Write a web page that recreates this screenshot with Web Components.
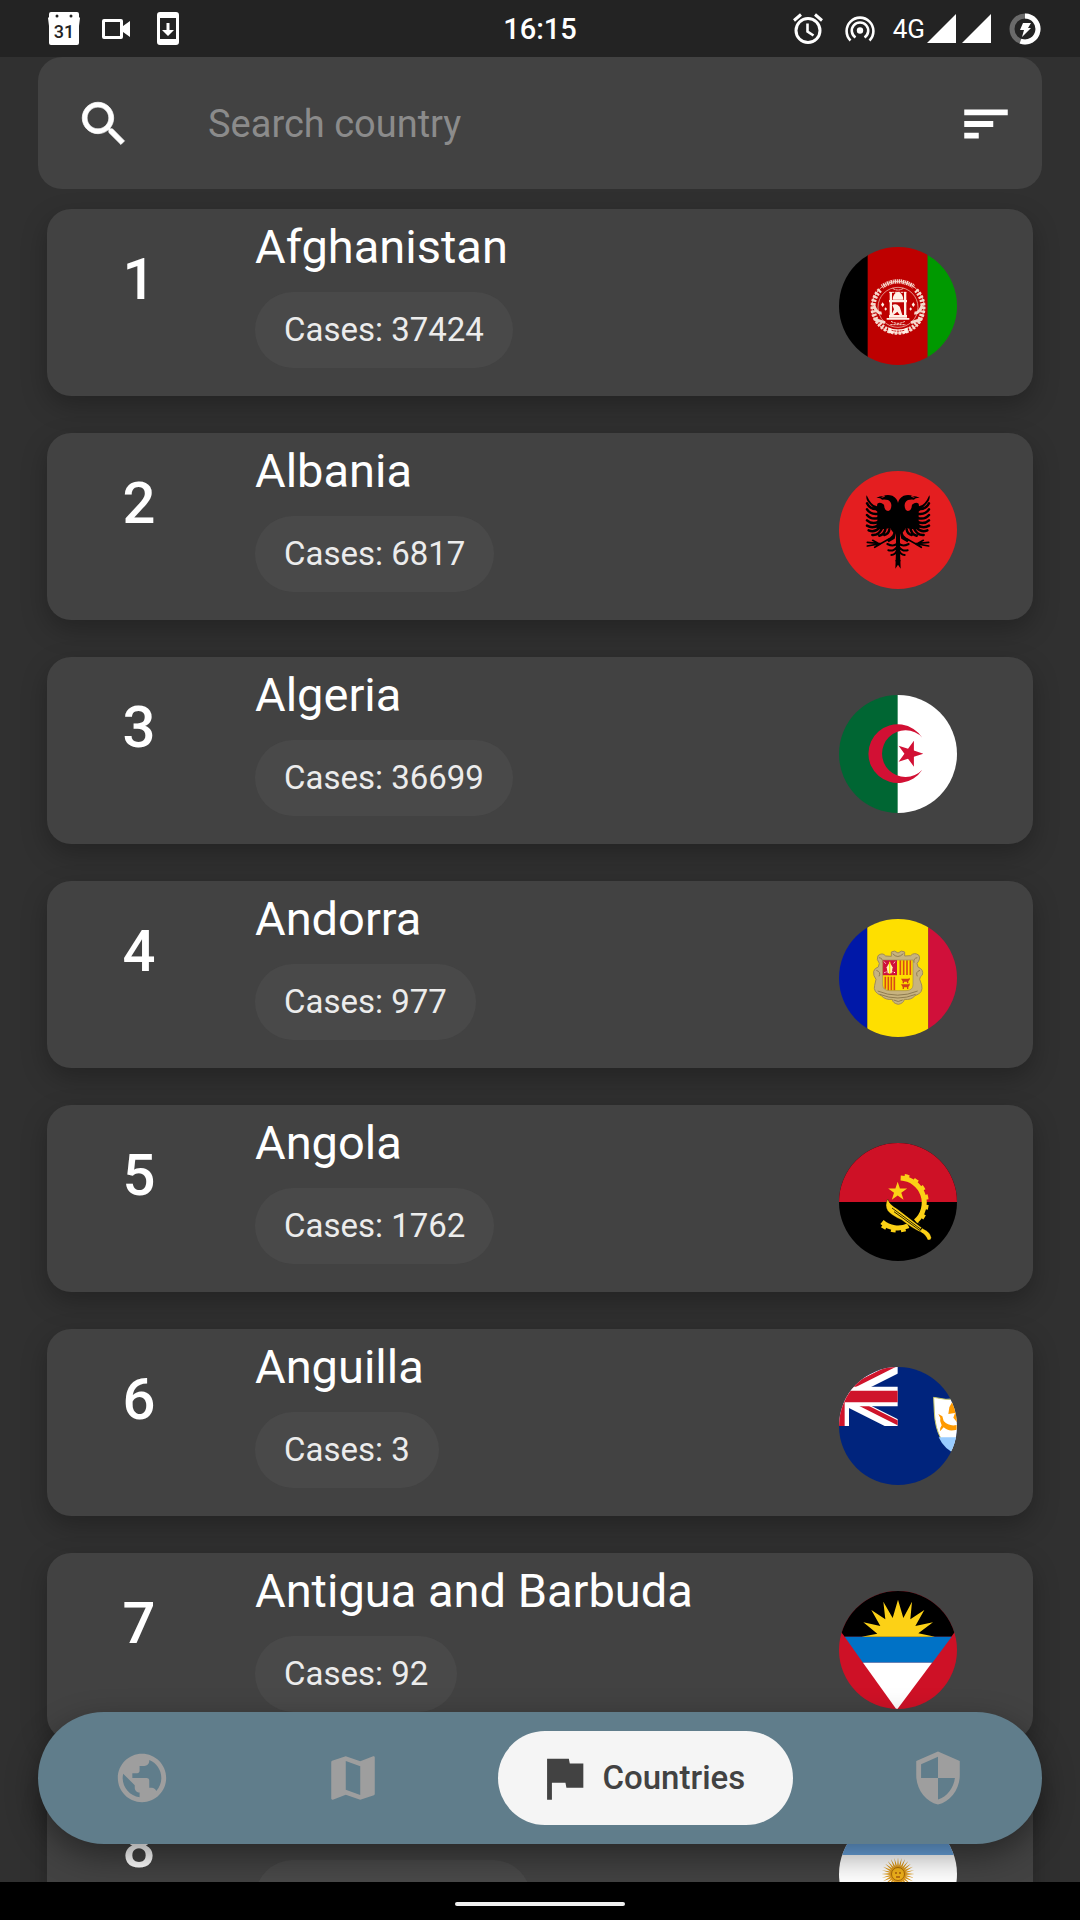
<!DOCTYPE html>
<html lang="en">
<head>
<meta charset="utf-8">
<meta name="viewport" content="width=device-width, initial-scale=1">
<title>Countries</title>
<style>
  body { margin: 0; background: #303030; font-family: Roboto, "Noto Sans", sans-serif; color: #fff; }
</style>
</head>
<body>
<app-shell>
  <status-bar slot="status" time="16:15" network="4G"></status-bar>
  <search-bar slot="search" placeholder="Search country"></search-bar>
  <country-card rank="1" cases="37424" flag="af">Afghanistan</country-card>
  <country-card rank="2" cases="6817" flag="al">Albania</country-card>
  <country-card rank="3" cases="36699" flag="dz">Algeria</country-card>
  <country-card rank="4" cases="977" flag="ad">Andorra</country-card>
  <country-card rank="5" cases="1762" flag="ao">Angola</country-card>
  <country-card rank="6" cases="3" flag="ai">Anguilla</country-card>
  <country-card rank="7" cases="92" flag="ag">Antigua and Barbuda</country-card>
  <country-card rank="8" cases="305966" flag="ar">Argentina</country-card>
  <tab-bar slot="tabs">
    <tab-item icon="globe" label="World"></tab-item>
    <tab-item icon="map" label="Map"></tab-item>
    <tab-item icon="flag" label="Countries" selected></tab-item>
    <tab-item icon="shield" label="Prevention"></tab-item>
  </tab-bar>
  <gesture-bar slot="gesture"></gesture-bar>
</app-shell>

<script>
const points = (cx, cy, n, outer, inner, start = -90) =>
  Array.from({ length: n * 2 }, (_, i) => {
    const a = (start + i * 180 / n) * Math.PI / 180, r = i % 2 ? inner : outer;
    return (cx + r * Math.cos(a)).toFixed(1) + ',' + (cy + r * Math.sin(a)).toFixed(1);
  }).join(' ');

const ICONS = {
  search: ['0 0 24 24', '<path d="M15.5 14h-.79l-.28-.27C15.41 12.59 16 11.11 16 9.5 16 5.91 13.09 3 9.5 3S3 5.91 3 9.5 5.91 16 9.5 16c1.61 0 3.09-.59 4.23-1.57l.27.28v.79l5 4.99L20.49 19l-4.99-5zm-6 0C7.01 14 5 11.99 5 9.5S7.01 5 9.5 5 14 7.01 14 9.5 11.99 14 9.5 14z" stroke="currentColor" stroke-width=".3"/>'],
  sort: ['0 0 24 24', '<path d="M3 18h6v-2.400H3V18zM3 6v2.400h18V6H3zm0 7.200h12v-2.400H3v2.400z"/>'],
  globe: ['0 0 24 24', '<path d="M12 2C6.48 2 2 6.48 2 12s4.48 10 10 10 10-4.48 10-10S17.52 2 12 2zm-1 17.93c-3.95-.49-7-3.85-7-7.93 0-.62.08-1.21.21-1.79L9 15v1c0 1.1.9 2 2 2v1.93zm6.9-2.54c-.26-.81-1-1.39-1.9-1.39h-1v-3c0-.55-.45-1-1-1H8v-2h2c.55 0 1-.45 1-1V7h2c1.1 0 2-.9 2-2v-.41c2.93 1.19 5 4.06 5 7.41 0 2.08-.8 3.97-2.1 5.39z"/>'],
  map: ['0 0 24 24', '<path d="M20.5 3l-.16.03L15 5.1 9 3 3.36 4.9c-.21.07-.36.25-.36.48V20.5c0 .28.22.5.5.5l.16-.03L9 18.9l6 2.1 5.64-1.9c.21-.07.36-.25.36-.48V3.500c0-.28-.22-.5-.5-.5zM15 19l-6-2.110V5l6 2.110V19z"/>'],
  flag: ['0 0 24 24', '<path d="M14.400 6L14 4H5v17h2v-7h5.600l.4 2h7V6z"/>'],
  shield: ['0 0 24 24', '<path d="M12 1L3 5v6c0 5.550 3.840 10.740 9 12 5.160-1.260 9-6.450 9-12V5l-9-4zm0 10.990h7c-.53 4.120-3.280 7.790-7 8.940V12H5V6.300l7-3.110v8.800z"/>'],
  calendar: ['0 0 32 33', '<path d="M3 0h26a2 2 0 0 1 2 2v3l1 1-1 8v17a2 2 0 0 1-2 2H3a2 2 0 0 1-2-2V14L0 6l1-1V2a2 2 0 0 1 2-2z"/><circle cx="9" cy="4" r="1.500" fill="#232323"/><circle cx="23" cy="4" r="1.500" fill="#232323"/><text x="16" y="26" font-size="18" font-weight="500" text-anchor="middle" fill="#232323">31</text>'],
  video: ['0 0 28 20', '<path fill-rule="evenodd" d="M2 0h17a2 2 0 0 1 2 2v5l7-5v16l-7-5v5a2 2 0 0 1-2 2H2a2 2 0 0 1-2-2V2a2 2 0 0 1 2-2zm1 3v14h15V3z"/>'],
  update: ['0 0 22 33', '<path fill-rule="evenodd" d="M3 0h16a3 3 0 0 1 3 3v27a3 3 0 0 1-3 3H3a3 3 0 0 1-3-3V3a3 3 0 0 1 3-3zm0 6v21h16V6z"/><path d="M9.500 11h3v7H17l-6 6-6-6h4.500z"/>'],
  alarm: ['0 0 30 31', '<g fill="none" stroke="currentColor" stroke-width="3"><circle cx="15" cy="17.500" r="12"/><path d="M1 7.500L8 1.500M29 7.500L22 1.500"/><path d="M14.500 10.500v8l6 4" stroke-width="2.600"/></g>'],
  hotspot: ['0 0 30 27', '<circle cx="15" cy="15.500" r="3.200"/><g fill="none" stroke="currentColor" stroke-width="2.600"><path d="M10.500 22.500a8.200 8.200 0 1 1 9 0"/><path d="M5.500 25.500a13.400 13.400 0 1 1 19 0"/></g>'],
  signal: ['0 0 29 29', '<path d="M0 29L29 0v29z"/>'],
  battery: ['0 0 32 32', '<g fill="none" stroke-width="5"><circle cx="16" cy="16" r="13" stroke="#6a6a6a"/><path d="M16 3a13 13 0 1 1-4.500 25.200" stroke="currentColor"/></g><path d="M14 10h8l-3 5h3l-9 9 2-7h-4z"/>']
};

const FLAGS = {
  af: ['58 45 354 354', `
    <path fill="#000" d="M50 40h95v365H50z"/><path fill="#be0000" d="M144 40h180v365H144z"/><path fill="#090" d="M324 40h95v365h-95z"/>
    <g fill="none" stroke="#f6d9cd">
      <circle cx="235" cy="226" r="78" stroke-width="2.500"/><circle cx="235" cy="226" r="60" stroke-width="2"/>
      <path d="M181 174a75 75 0 1 0 108 0" stroke-width="15" stroke-dasharray="7 4"/>
      <path d="M187 164q48-32 96 0" stroke-width="13" stroke-dasharray="3 2 5 2"/>
      <path d="M208 181h54M219 169q16 10 32 0M214 268q21 12 42 0M212 278h46" stroke-width="3" stroke-dasharray="7 2"/>
      <path d="M162 220q10 26 24 23M308 220q-10 26-24 23M165 262l31 10M305 262l-31 10" stroke-width="9"/>
    </g>
    <g fill="#fff0e5"><path d="M201 258h68v5h-68zM208 204h54v7h-54zM208 249h54v8h-54zM210 180h7v75h-7zM253 180h7v75h-7zM219 203q1-20 16-24 15 4 16 24z"/>
    <path d="M218 219q12-6 22 5l8 25h-8l-7-10-12 10h-6l8-17z"/>
    <path d="M189 211l5 7-5 7-5-7zM198 226l4 5-4 5-4-5zM281 211l5 7-5 7-5-7zM273 226l4 5-4 5-4-5z"/>
    <path d="M205 286q30 13 60 0l-3 18q-27-5-54 0z"/></g>
    <path d="M216 295q18 5 38 0" fill="none" stroke="#be0000" stroke-width="3" stroke-dasharray="6 2"/>`],
  al: ['58 45 354 354', `
    <path fill="#e41e20" d="M50 40h370v370H50z"/>
    <defs><g id="half">
      <path d="M236 144q-3-18-18-25-16-4-27 1-11 0-21 5 14 0 17 6 10-1 18 1 11 6 10 18 0 12-9 15-12 0-13-19-11-9-20-3l-1 8q-17-1-31-33-5 13 12 29l20 20v33l-5 13 8 6h22l13-3 10 14-3 8-16 15 5 6 18-11 4-16 5 19-2 20-6 10 10 4v14l-9 15 16 24z"/>
      <g fill="none" stroke="#000" stroke-width="8" stroke-linecap="round">
        <path d="M176 160q-25 1-34-18M176 173q-23 4-34-13M176 186q-22 6-34-9M176 198q-20 8-34-5M176 208q-18 11-34 1M180 215q-16 16-33 8M186 219q-10 20-28 18M197 220q-4 16-18 19M209 220q-2 14-15 17" stroke-width="7.500"/>
        <path d="M232 263q-11 10-29 1M232 272q-9 15-26 11M232 282q-5 15-17 15" stroke-width="6"/>
        <path d="M209 248l-26 15-40-4M183 263l-40 7M183 263l-18 11M175 262l-16-9" stroke-width="5"/>
      </g></g></defs>
    <use href="#half"/><use href="#half" transform="matrix(-1 0 0 1 470 0)"/>
    <path d="M229 155h12v160h-12z"/>
    <path d="M186 124l9-3M284 124l-9-3" stroke="#e41e20" stroke-width="3"/>`],
  dz: ['58 44 354 354', `
    <path fill="#063" d="M50 40h185v365H50z"/><path fill="#fff" d="M234 40h185v365H234z"/>
    <path fill="#d21034" d="M308 172a88 88 0 1 0 0 96 70 70 0 1 1 0-96z"/>
    <polygon fill="#d21034" points="${points(270, 220, 5, 41, 15.7, 0)}"/>`],
  ad: ['58 44 354 354', `
    <path fill="#0018a8" d="M50 40h93v365H50z"/><path fill="#fedf00" d="M143 40h183v365H143z"/><path fill="#d0103a" d="M326 40h93v365h-93z"/>
    <path fill="#c7b37f" stroke="#a08b58" stroke-width="3" d="M215 143q9-7 20 3 11-10 20-3v12l18-1q10-11 24-2 7 12-5 25l3 11q18 8 13 24-8 5-8 13l6 17q6 24-20 32-12 14-32 11-2 12-18 15-17-3-18-15-20 3-33-11-26-11-20-31l4-18q-9-11-7-24 3-10 14-13l3-11q-10-12-4-23 13-11 23 1l17 1z"/>
    <path fill="none" stroke="#8f7c50" stroke-width="3" d="M219 148q15 17 32 0M178 160q13 2 10 15M293 160q-13 2-10 15M170 198q15 5 8 18M301 198q-15 5-8 18M174 260q60 25 120 0M180 270q55 22 108 0M222 287q14 9 27 0"/>
    <path fill="#fedf00" d="M189 167h91v75q0 16-21 17h-49q-21-1-21-17z"/>
    <path fill="#d0103a" d="M189 167h43v46h-43z"/>
    <path fill="#fff3b0" d="M210 174l9 15-3 18h-12l-3-18z"/><path stroke="#fedf00" stroke-width="4" d="M210 172v36"/>
    <path stroke="#fff" stroke-width="3" stroke-dasharray="4 3" d="M193 172l6 7M194 205l8-3M226 172l-5 7M226 205l-8-3"/>
    <path stroke="#d94a14" stroke-width="5" d="M242 168v44M252 168v44M262 168v44M272 168v44M197 217v36M206 217v41M215 217v41M224 217v41"/>
    <path fill="#d0401a" d="M244 223h22l4-3v6l-4 5v6h-4v-5h-9v5h-4v-6zM244 240h22l4-3v6l-4 5v6h-4v-5h-9v5h-4v-6z"/>
    <path fill="none" stroke="#a08b58" stroke-width="2" d="M189 167h91v75q0 16-21 17h-49q-21-1-21-17z"/>`],
  ao: ['58 39 354 354', `
    <path fill="#000" d="M50 30h370v370H50z"/><path fill="#ce1126" d="M50 30h370v186H50z"/>
    <g fill="none" stroke="#fcd116"><path d="M243 144a74 74 0 0 1 45 130M266 287a74 74 0 0 1-79-11" stroke-width="15"/>
    <path d="M243 136a82 82 0 0 1 53 142M269 295a82 82 0 0 1-88-12" stroke-width="10" stroke-dasharray="14 16" stroke-dashoffset="-12"/></g>
    <polygon fill="#fcd116" points="${points(234, 185, 5, 30, 11.500)}"/>
    <path fill="#fcd116" stroke="#000" stroke-width="1" d="M204 207q5 17 28 29l78 60q22 10 25 27-2 10-11 6-6-15-20-22-25-11-58-37-31-14-42-28-10-15 0-35z"/>
    <path fill="none" stroke="#000" stroke-width="2.500" d="M217 234l88 65M223 245l80 58"/><path d="M302 300l5-7" stroke="#000" stroke-width="3"/>`],
  ai: ['58 39 354 354', `
    <path fill="#00247d" d="M50 30h370v370H50z"/>
    <clipPath id="canton"><path d="M50 30h184v186H50z"/></clipPath>
    <g clip-path="url(#canton)">
      <path stroke="#fff" stroke-width="36" d="M58 127l200 100.500M58 127L258 26.500"/>
      <path stroke="#cf142b" stroke-width="13" d="M58 118l200 100.500M58 117L258 16.500"/>
      <path fill="#fff" d="M50 98h190v59H50zM50 30h38v190H50z"/><path fill="#cf142b" d="M50 110h190v35H50zM50 30h25v190H50z"/>
    </g>
    <path fill="#fff" stroke="#c9c968" stroke-width="3" d="M342 130q35 10 76 4v170q-70-33-74-130z"/>
    <path fill="#9cf" d="M357 250h60v54q-42-15-60-54z"/>
    <path fill="#ff9a00" d="M356 180l12 7 4 14q16 17 39 12v14q-25 7-39-7-12 14-11 10 0-9 5-16-7-12-4-22zM386 180l3-20 13-24 10 36v33l-11-14 5-14z"/>`],
  ag: ['58 39 354 354', `
    <path fill="#ce1126" d="M50 30h370v370H50z"/>
    <path fill="#000" d="M50 30h370v112L403 165l-8 11H75L50 142z"/>
    <path fill="#0072c6" d="M75 176h321l-58 78H130z"/><path fill="#fff" d="M130 254h207L234 392h-5z"/>
    <path fill="#fcd116" d="M126 176l47-9-42-34 51 11-27-48 42 28-6-53 28 49 16-55 16 55 26-49-5 53 42-28-27 48 53-11-44 33 50 10z"/>`],
  ar: ['0 0 118 118', `
    <path fill="#fff" d="M0 0h118v118H0z"/><path fill="#6aa5e0" d="M0 0h118v40H0zM0 79h118v39H0z"/>
    <polygon fill="#dd9a1c" points="${points(59, 59, 28, 16.500, 8)}"/>
    <circle cx="59" cy="59" r="6.500" fill="#f0b21b" stroke="#a8690a" stroke-width="1"/>
    <path d="M56 58h2M60 58h2M57 62h4" stroke="#85340a"/>`]
};

const svg = ([box, body], color = 'currentColor') =>
  `<svg viewBox="${box}" fill="${color}" aria-hidden="true">${body}</svg>`;

class Base extends HTMLElement {
  connectedCallback() {
    if (this.shadowRoot) return;
    this.attachShadow({ mode: 'open' }).innerHTML =
      `<style>*{box-sizing:border-box}:host{box-sizing:border-box}${this.css()}</style>${this.html()}`;
  }
  attr(name) { return this.getAttribute(name) || ''; }
}

customElements.define('app-icon', class extends Base {
  css() { return ':host{display:block;flex:none;width:var(--icon-size,58px)} svg{display:block;width:100%}'; }
  html() { return svg(ICONS[this.attr('name')]); }
});

customElements.define('country-flag', class extends Base {
  css() { return ':host{display:block;flex:none;width:118px;height:118px;border-radius:50%;overflow:hidden} svg{display:block;width:100%;height:100%}'; }
  html() { return svg(FLAGS[this.attr('code')], '#000'); }
});

customElements.define('app-shell', class extends Base {
  css() { return `
    :host{display:flex;flex-direction:column;height:100vh;overflow:hidden;background:#303030}
    main{flex:1;min-height:0;position:relative;overflow:hidden;display:flex;flex-direction:column}
    .search{padding:0 38px;position:relative}
    .list{padding:20px 47px;display:flex;flex-direction:column;gap:37px}
    .tabs{position:absolute;left:38px;right:38px;bottom:38px}`; }
  html() { return `
    <slot name="status"></slot>
    <main><div class="search"><slot name="search"></slot></div>
      <div class="list" role="list"><slot></slot></div>
      <div class="tabs"><slot name="tabs"></slot></div></main>
    <slot name="gesture"></slot>`; }
});

customElements.define('status-bar', class extends Base {
  css() { return `
    :host{display:grid;grid-template-columns:1fr auto 1fr;align-items:center;height:57px;flex:none;padding:0 39px;background:#232323}
    div{display:flex;align-items:center}
    .right{justify-content:flex-end}
    .left{gap:22px;padding-left:9px}
    .video{--icon-size:28px;margin-right:5px}
    .phone{--icon-size:22px}
    .calendar,.battery{--icon-size:32px}
    .alarm,.hotspot{--icon-size:30px}
    .hotspot{margin:0 18px 0 22px}
    .signal{--icon-size:29px;margin-left:6px}
    span + .signal{margin-left:2px}
    .battery{margin-left:18px}
    time{font-size:29px;font-weight:500;line-height:36px}
    span{font-size:26px;line-height:32px}`; }
  html() { return `
    <div class="left"><app-icon class="calendar" name="calendar"></app-icon><app-icon class="video" name="video"></app-icon><app-icon class="phone" name="update"></app-icon></div>
    <time>${this.attr('time')}</time>
    <div class="right"><app-icon class="alarm" name="alarm"></app-icon><app-icon class="hotspot" name="hotspot"></app-icon><span>${this.attr('network')}</span><app-icon class="signal" name="signal"></app-icon><app-icon class="signal" name="signal"></app-icon><app-icon class="battery" name="battery"></app-icon></div>`; }
});

customElements.define('search-bar', class extends Base {
  css() { return `
    :host{display:block}
    form{display:flex;align-items:center;height:132px;padding:2px 27px 0 37px;border-radius:24px;background:#424242}
    label{display:block;margin-right:75px}
    input{flex:1;min-width:0;border:0;padding:0;outline:0;background:none;font:400 38px/44px Roboto,"Noto Sans",sans-serif;color:#fff}
    input::placeholder{color:#8b8b8b;opacity:1}
    button{border:0;padding:0;background:none;color:inherit}`; }
  html() { return `<form role="search"><label for="q" aria-label="Search"><app-icon name="search"></app-icon></label>
    <input id="q" type="text" placeholder="${this.attr('placeholder')}"><button type="button" aria-label="Sort"><app-icon name="sort"></app-icon></button></form>`; }
});

customElements.define('country-card', class extends Base {
  connectedCallback() { this.setAttribute('role', 'listitem'); super.connectedCallback(); }
  css() { return `
    :host{display:grid;flex:none;grid-template-columns:184px 1fr auto;align-items:start;padding:10px 76px 28px 0;border-radius:24px;background:#424242;box-shadow:0 10px 26px rgba(0,0,0,.26)}
    .rank{margin-top:27px;text-align:center;font-size:58px;font-weight:500;line-height:66px}
    .info{padding-left:24px;display:flex;flex-direction:column;align-items:flex-start;gap:18px}
    h2{margin:0;font-size:47px;font-weight:400;line-height:55px}
    .chip{padding:0 29px;border-radius:38px;background:#494949;color:#ececec;font-size:33px;line-height:76px}
    country-flag{margin-top:28px}`; }
  html() { return `
    <div class="rank">${this.attr('rank')}</div>
    <div class="info"><h2><slot></slot></h2><div class="chip">Cases: ${this.attr('cases')}</div></div>
    <country-flag code="${this.attr('flag')}"></country-flag>`; }
});

customElements.define('tab-bar', class extends Base {
  css() { return `
    :host{display:block}
    nav{display:flex;align-items:center;justify-content:space-between;height:132px;padding:0 38px;border-radius:66px;background:#607d8b;box-shadow:0 12px 32px rgba(0,0,0,.4)}`; }
  html() { return '<nav><slot></slot></nav>'; }
});

customElements.define('tab-item', class extends Base {
  css() { return `
    :host{display:block}
    button{display:flex;align-items:center;gap:10px;height:94px;padding:0 37px;border:0;border-radius:47px;background:none;color:#9e9e9e;font:500 33px/40px Roboto,"Noto Sans",sans-serif}
    :host([selected]) button{padding-right:48px;background:#f5f5f5;color:#424242}`; }
  html() {
    const on = this.hasAttribute('selected'), label = this.attr('label');
    return `<button type="button" ${on ? 'aria-current="page"' : `aria-label="${label}"`}><app-icon name="${this.attr('icon')}"></app-icon>${on ? `<span>${label}</span>` : ''}</button>`;
  }
});

customElements.define('gesture-bar', class extends Base {
  css() { return `
    :host{display:flex;flex:none;height:38px;align-items:center;justify-content:center;padding-top:6px;background:#000}
    div{width:170px;height:4px;border-radius:2px;background:#f0f0f0}`; }
  html() { return '<div></div>'; }
});
</script>
</body>
</html>
